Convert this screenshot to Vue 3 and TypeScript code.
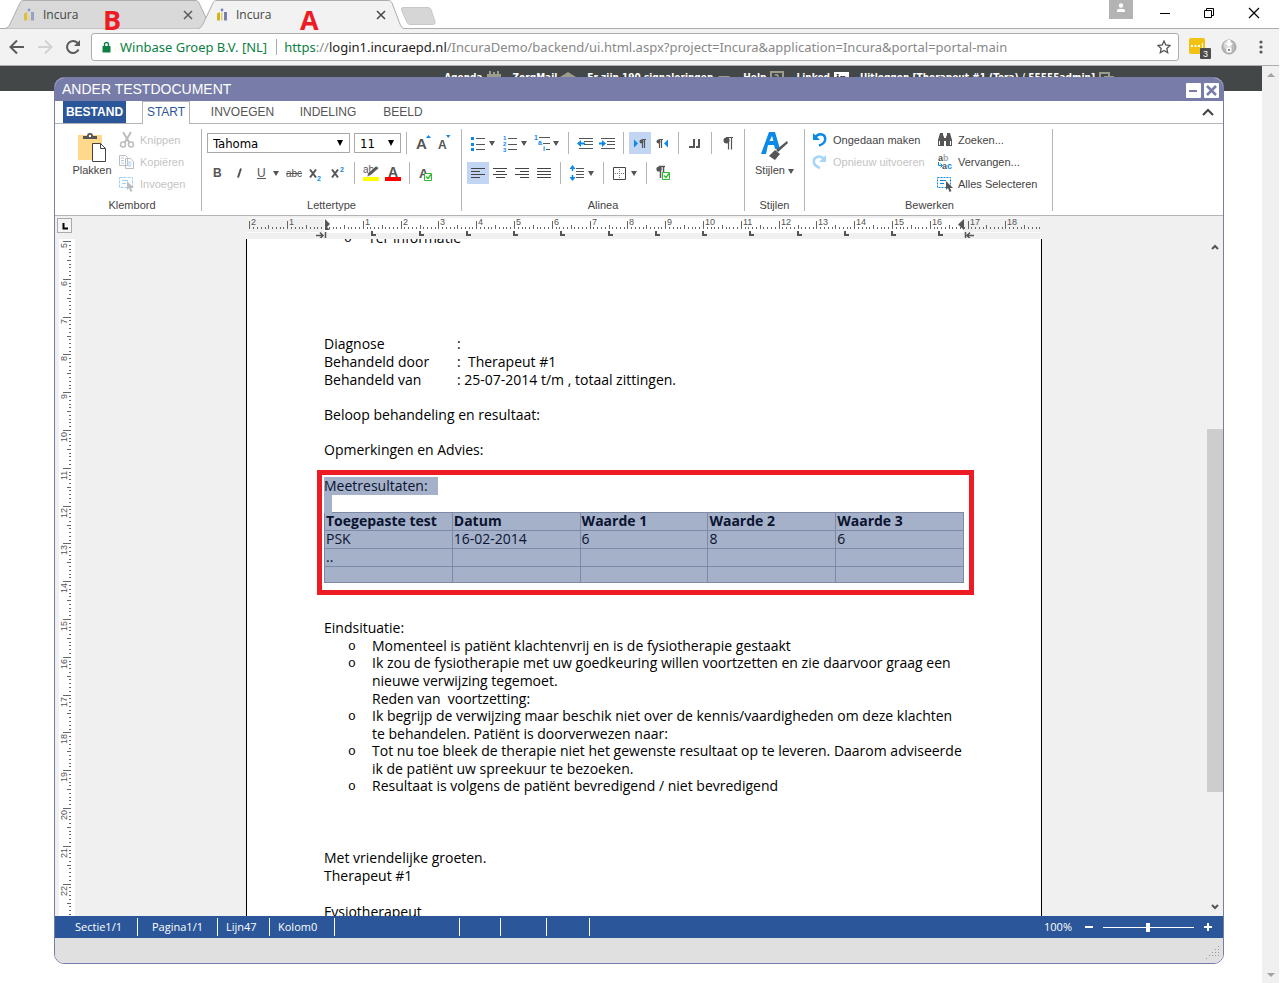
<script setup lang="ts">
import { ref } from 'vue'

interface Tick { pos: number; len: number; label: string }

const CM = 37.8
const fontName = ref('Tahoma')
const fontSize = ref('11')
const zoom = ref(49)

function buildTicks(from: number, to: number, origin: number, limit: number): Tick[] {
  const ticks: Tick[] = []
  for (let i = from * 10; i <= to * 10; i++) {
    const pos = Math.round(origin + (i * CM) / 10)
    if (pos < 0 || pos > limit) continue
    const whole = i % 10 === 0
    ticks.push({ pos, len: whole ? 8 : i % 5 === 0 ? 4 : 2, label: whole && i !== 0 ? String(Math.abs(i / 10)) : '' })
  }
  return ticks
}

const hTicks = buildTicks(-2, 19, 77, 792)
const vTicks = buildTicks(5, 23, -187, 676)
const tabStops = Array.from({ length: 13 }, (_, i) => Math.round(78 + (i + 1) * 1.25 * CM))

const columns = ['Toegepaste test', 'Datum', 'Waarde 1', 'Waarde 2', 'Waarde 3']
const results = [
  ['PSK', '16-02-2014', '6', '8', '6'],
  ['..', '', '', '', ''],
  ['', '', '', '', ''],
]
const outcomes: string[][] = [
  ['Momenteel is patiënt klachtenvrij en is de fysiotherapie gestaakt'],
  ['Ik zou de fysiotherapie met uw goedkeuring willen voortzetten en zie daarvoor graag een', 'nieuwe verwijzing tegemoet.', 'Reden van\u00a0 voortzetting:'],
  ['Ik begrijp de verwijzing maar beschik niet over de kennis/vaardigheden om deze klachten', 'te behandelen. Patiënt is doorverwezen naar:'],
  ['Tot nu toe bleek de therapie niet het gewenste resultaat op te leveren. Daarom adviseerde', 'ik de patiënt uw spreekuur te bezoeken.'],
  ['Resultaat is volgens de patiënt bevredigend / niet bevredigend'],
]
</script>

<template>
  <div class="browser">
    <header class="tabstrip">
      <div class="tab tab-back">
        <svg class="tab-shape" viewBox="0 0 206 29" preserveAspectRatio="none"><path d="M0 28.5C3 28 4 26 5 24L15 3C16 1 17 .5 19 .5H190C192 .5 193 1 194 3L204 24C205 26 206 28.500 208 28.500" fill="#d9d9d9" stroke="#adadad" /></svg>
        <svg class="fav" viewBox="0 0 13 14"><path d="M1 5.500L4 4v8.500H1z" fill="#dcc03a" /><path d="M5 5l1.500-1v8.500H5z" fill="#e3d48c" /><circle cx="6" cy="2" r="1.400" fill="#8d9bc4" /><path d="M8 4h3v8.500H8z" fill="#9a9fc6" /><path d="M5.500 4H7v3H5.500z" fill="#d9d9d9" /></svg>
        <span>Incura</span>
        <button class="x" aria-label="Tab sluiten"><svg viewBox="0 0 10 10"><path d="M1 1l8 8M9 1l-8 8" stroke="#5a5a5a" stroke-width="1.500" /></svg></button>
        <b class="mark">B</b>
      </div>
      <div class="tab tab-front">
        <svg class="tab-shape" viewBox="0 0 206 29" preserveAspectRatio="none"><path d="M0 28.5C3 28 4 26 5 24L15 3C16 1 17 .5 19 .5H190C192 .5 193 1 194 3L202 24C203 26 204 28.500 206 28.500V29H0z" fill="#f2f2f2" /><path d="M0 28.5C3 28 4 26 5 24L15 3C16 1 17 .5 19 .5H190C192 .5 193 1 194 3L202 24C203 26 204 28.500 206 28.500" fill="none" stroke="#adadad" /></svg>
        <svg class="fav" viewBox="0 0 13 14"><path d="M1 5.500L4 4v8.500H1z" fill="#d3b21c" /><path d="M5 5l1.500-1v8.500H5z" fill="#dccb70" /><circle cx="6" cy="2" r="1.400" fill="#6f83b6" /><path d="M8 4h3v8.500H8z" fill="#7b80b4" /></svg>
        <span>Incura</span>
        <button class="x" aria-label="Tab sluiten"><svg viewBox="0 0 10 10"><path d="M1 1l8 8M9 1l-8 8" stroke="#444" stroke-width="1.500" /></svg></button>
        <b class="mark">A</b>
      </div>
      <button class="newtab" aria-label="Nieuw tabblad"><svg viewBox="0 0 36 18"><path d="M3 .5h25q2 0 3 2l4 12q.5 3-2 3H10q-2 0-3-2L1.500 3Q1 .5 3 .5z" fill="#d6d6d6" stroke="#c8c8c8" /></svg></button>
      <div class="grow"></div>
      <button class="person" aria-label="Profiel"><svg viewBox="0 0 24 19"><circle cx="12" cy="5.500" r="2.200" fill="#fff" /><path d="M8 12V10.500Q8 8.700 12 8.700T16 10.500V12z" fill="#fff" /></svg></button>
      <button class="win" aria-label="Minimaliseren"><svg viewBox="0 0 12 12"><path d="M1 6.500h10" stroke="#000" /></svg></button>
      <button class="win" aria-label="Herstellen"><svg viewBox="0 0 12 12"><path d="M1.500 3.500h7v7h-7zM3.500 3.500v-2h7v7h-2" fill="none" stroke="#000" /></svg></button>
      <button class="win" aria-label="Sluiten"><svg viewBox="0 0 12 12"><path d="M1 1l10 10M11 1L1 11" stroke="#000" stroke-width="1.200" /></svg></button>
    </header>

    <nav class="toolbar">
      <button class="nav" aria-label="Terug"><svg viewBox="0 0 16 16"><path d="M15 8H2M8 1.500L1.500 8 8 14.500" fill="none" stroke="#5a5a5a" stroke-width="2" /></svg></button>
      <button class="nav" aria-label="Vooruit"><svg viewBox="0 0 16 16"><path d="M1 8h13M8 1.500L14.500 8 8 14.500" fill="none" stroke="#d2d2d2" stroke-width="2" /></svg></button>
      <button class="nav" aria-label="Vernieuwen"><svg viewBox="0 0 16 16"><path d="M13.500 10.500A6 6 0 1 1 12.500 4" fill="none" stroke="#5a5a5a" stroke-width="2" /><path d="M15 1v6H9z" fill="#5a5a5a" /></svg></button>
      <div class="address">
        <svg class="lock" viewBox="0 0 9 12"><path d="M.5 5h8v6.500h-8z" fill="#0b8043" /><path d="M2.500 5V3.500a2 2 0 0 1 4 0V5" fill="none" stroke="#0b8043" stroke-width="1.400" /></svg>
        <span class="green">Winbase Groep B.V. [NL]</span>
        <i class="bar"></i>
        <span class="url"><span class="green">https</span>://<span class="host">login1.incuraepd.nl</span>/IncuraDemo/backend/ui.html.aspx?project=Incura&amp;application=Incura&amp;portal=portal-main</span>
        <button class="star" aria-label="Bladwijzer"><svg viewBox="0 0 14 14"><path d="M7 1l1.800 4 4.200.5-3.200 2.900.9 4.300L7 10.500l-3.700 2.200.9-4.300L1 5.500l4.200-.5z" fill="none" stroke="#555" stroke-width="1.300" /></svg></button>
      </div>
      <button class="ext" aria-label="Extensie"><svg viewBox="0 0 24 24"><rect x="1" y="3" width="16" height="16" rx="2" fill="#f2c212" /><path d="M3 10h2v2H3zM6.500 10h2v2h-2zM10 10h2v2h-2zM14 8h1v5h-1z" fill="#fff" /><rect x="12" y="13" width="11" height="11" rx="1" fill="#4d4d4d" /><text x="15" y="22" font-size="9" fill="#fff">3</text></svg></button>
      <button class="orb" aria-label="Downloads"><svg viewBox="0 0 16 16"><circle cx="8" cy="8" r="7" fill="#b8b8b8" stroke="#a2a2a2" /><circle cx="7" cy="6" r="4.500" fill="#d9d9d9" /><path d="M6.500 1h3v3H12L8 8 4 4h2.500z" fill="#fff" /><rect x="5.500" y="8.500" width="5" height="5" rx="1" fill="#fff" /><rect x="7" y="10" width="2" height="2" fill="#888" /></svg></button>
      <button class="dots" aria-label="Menu"><svg viewBox="0 0 4 14"><circle cx="2" cy="2" r="1.600" fill="#5a5a5a" /><circle cx="2" cy="7" r="1.600" fill="#5a5a5a" /><circle cx="2" cy="12" r="1.600" fill="#5a5a5a" /></svg></button>
    </nav>

    <main class="site">
      <div class="content">
        <div class="menubar">
          <a href="#">Agenda<svg viewBox="0 0 16 14"><path d="M1 3h14v10H1z" fill="#9c9c8c" /><path d="M4 0v5M8 1v3M12 0v5" stroke="#9c9c8c" stroke-width="2" /></svg></a>
          <a href="#">ZorgMail<svg viewBox="0 0 16 14"><path d="M0 6l8-5 8 5v7H0z" fill="#9c9c8c" /></svg></a>
          <a href="#">Er zijn 190 signaleringen<svg viewBox="0 0 16 14"><path d="M2 5h12l-6 6z" fill="#9c9c8c" /></svg></a>
          <a href="#">Help<svg viewBox="0 0 16 14"><rect x="2" y="1" width="12" height="12" fill="none" stroke="#9c9c8c" stroke-width="2" /><text x="5" y="11" font-size="10" fill="#9c9c8c">?</text></svg></a>
          <a href="#">Linked<svg viewBox="0 0 16 14"><rect x="1" y="1" width="15" height="13" fill="#fff" /><text x="3" y="11" font-size="11" font-weight="bold" fill="#222">in</text></svg></a>
          <a href="#">Uitloggen [Therapeut #1 (Tera) / 55555admin]<svg viewBox="0 0 16 14"><path d="M10 12H2V2h9v3M6 6h9v5" fill="none" stroke="#9c9c8c" stroke-width="2" /></svg></a>
        </div>
      </div>
      <aside class="pagescroll">
        <svg viewBox="0 0 8 4"><path d="M0 4l4-4 4 4z" fill="#a3a3a3" /></svg>
        <svg viewBox="0 0 8 4"><path d="M0 0l4 4 4-4z" fill="#a3a3a3" /></svg>
      </aside>

      <section class="dialog">
        <div class="title">
          <span>ANDER TESTDOCUMENT</span>
          <button aria-label="Minimaliseren"><svg viewBox="0 0 15 15"><path d="M3 8h8" stroke="#777da8" stroke-width="2" /></svg></button>
          <button aria-label="Sluiten"><svg viewBox="0 0 15 15"><path d="M3 3l9 9M12 3l-9 9" stroke="#777da8" stroke-width="2.500" /></svg></button>
        </div>
        <div class="tabs">
          <button class="file">BESTAND</button>
          <button class="active">START</button>
          <button class="t3">INVOEGEN</button>
          <button class="t4">INDELING</button>
          <button class="t5">BEELD</button>
          <button class="fold" aria-label="Lint samenvouwen"><svg viewBox="0 0 12 8"><path d="M1 7l5-5 5 5" fill="none" stroke="#444" stroke-width="2" /></svg></button>
        </div>

        <div class="ribbon">
          <div class="group g1">
            <div class="body clip">
              <button class="big">
                <svg viewBox="0 0 30 32" width="30" height="32"><rect x="1" y="4" width="24" height="25" fill="#ffd88c" /><path d="M6 8V5h4q0-3 3-3t3 3h4v3z" fill="#555" /><circle cx="13" cy="5" r="1.200" fill="#fff" /><path d="M15.500 12.500h8l5 5v13h-13z" fill="#fff" stroke="#444" /><path d="M23.500 12.500v5h5" fill="none" stroke="#444" /></svg>
                Plakken
              </button>
              <div class="stack">
                <button disabled><svg viewBox="0 0 16 16"><path d="M4 0l6.500 11M12 0L5.500 11" stroke="#bdbdbd" stroke-width="2" /><circle cx="4" cy="12.500" r="2.500" fill="none" stroke="#bdbdbd" stroke-width="1.500" /><circle cx="12" cy="12.500" r="2.500" fill="none" stroke="#bdbdbd" stroke-width="1.500" /></svg>Knippen</button>
                <button disabled><svg viewBox="0 0 16 16"><path d="M.5 1.500h6l2 2v8h-8zM6.500 4.500h5l3 3v7h-8z" fill="#fff" stroke="#bdbdbd" /><path d="M2 4h3M2 6.500h3M2 9h3M8.500 8h4M8.500 10h4M8.500 12h4" stroke="#a6cdf0" /></svg>Kopiëren</button>
                <button disabled><svg viewBox="0 0 16 16"><path d="M.5 1.500h13v10H.5z" fill="none" stroke="#9fd0f7" stroke-dasharray="3 1" /><path d="M3 4.500h6M3 7.500h4" stroke="#9fd0f7" /><path d="M8 5v9l2-2 1.500 4 2-1-1.500-3h3z" fill="#bdbdbd" /></svg>Invoegen</button>
              </div>
            </div>
            <div class="cap">Klembord</div>
          </div>

          <div class="group g2">
            <div class="body rows">
              <div class="row">
                <label class="sel fontsel"><select v-model="fontName" aria-label="Lettertype"><option>Tahoma</option></select><i class="car"></i></label>
                <label class="sel sizesel"><select v-model="fontSize" aria-label="Tekengrootte"><option>11</option></select><i class="car"></i></label>
                <i class="sep"></i>
                <button class="b" aria-label="Groter"><svg viewBox="0 0 22 22"><text x="4" y="17" font-size="15" font-weight="bold" fill="#555">A</text><path d="M14 6l2.500-3L19 6z" fill="#0a8ae6" /></svg></button>
                <button class="b" aria-label="Kleiner"><svg viewBox="0 0 22 22"><text x="4" y="17" font-size="12" font-weight="bold" fill="#555">A</text><path d="M12 3h4.500L14.200 6z" fill="#0a8ae6" /></svg></button>
              </div>
              <div class="row">
                <button class="b"><svg viewBox="0 0 22 22"><text x="6" y="15" font-size="12" font-weight="bold" fill="#555">B</text></svg></button>
                <button class="b"><svg viewBox="0 0 22 22"><path d="M12 6.500l-3 9" stroke="#555" stroke-width="2" /></svg></button>
                <button class="b w"><svg viewBox="0 0 22 22"><text x="6" y="15" font-size="12" fill="#555">U</text><path d="M6 16.500h9" stroke="#555" /></svg><i class="car s"></i></button>
                <button class="b"><svg viewBox="0 0 22 22"><text x="3" y="15" font-size="10" fill="#555">abc</text><path d="M3 11.500h16" stroke="#555" /></svg></button>
                <button class="b"><svg viewBox="0 0 22 22"><path d="M5 7.500l6 8M11 7.500l-6 8" stroke="#555" stroke-width="2" /><text x="12" y="19" font-size="7" font-weight="bold" fill="#0a8ae6">2</text></svg></button>
                <button class="b"><svg viewBox="0 0 22 22"><path d="M5 7.500l6 8M11 7.500l-6 8" stroke="#555" stroke-width="2" /><text x="13" y="10" font-size="7" font-weight="bold" fill="#0a8ae6">2</text></svg></button>
                <i class="sep"></i>
                <button class="b"><svg viewBox="0 0 22 22"><text x="3" y="11" font-size="10" fill="#555">ab</text><path d="M7 15l1-4 8-7 3 2-8 7z" fill="#555" stroke="#fff" stroke-width=".6" /><path d="M3 15h16v4H3z" fill="#ff0" /></svg></button>
                <button class="b"><svg viewBox="0 0 22 22"><text x="6" y="15" font-size="14" font-weight="bold" fill="#555">A</text><path d="M3 15h16v4H3z" fill="#f00" /></svg></button>
                <i class="sep"></i>
                <button class="b"><svg viewBox="0 0 22 22"><text x="4" y="16" font-size="13" font-weight="bold" fill="#555">A</text><path d="M9.500 11.500h7v7h-7z" fill="#fff" stroke="#2db82d" /><path d="M11 14.500l2 2 3-4" fill="none" stroke="#2db82d" stroke-width="1.300" /></svg></button>
              </div>
            </div>
            <div class="cap">Lettertype</div>
          </div>

          <div class="group g3">
            <div class="body rows">
              <div class="row">
                <button class="b w"><svg viewBox="0 0 22 22"><path d="M9 6.500h9M9 12.500h9M9 17.500h9" stroke="#555" /><path d="M4 5h3v3H4zM4 11h3v3H4zM4 16h3v3H4z" fill="#0a8ae6" /></svg><i class="car s"></i></button>
                <button class="b w"><svg viewBox="0 0 22 22"><path d="M9 6.500h9M9 12.500h9M9 17.500h9" stroke="#555" /><g fill="#0a8ae6" font-size="6" font-weight="bold"><text x="4" y="8">1</text><text x="4" y="14">2</text><text x="4" y="20">3</text></g></svg><i class="car s"></i></button>
                <button class="b w"><svg viewBox="0 0 22 22"><path d="M8 5.500h11M12 11.500h7M15 17.500h4" stroke="#555" /><g fill="#0a8ae6" font-size="7" font-weight="bold"><text x="3" y="8">1</text><text x="7" y="13">a</text><text x="12" y="19">i</text></g></svg><i class="car s"></i></button>
                <i class="sep"></i>
                <button class="b"><svg viewBox="0 0 22 22"><path d="M5 6.500h14M10 9.500h9M10 12.500h9M5 16.500h14" stroke="#555" /><path d="M3 11.500L7 8v2.500h4v2H7V15z" fill="#0a8ae6" /></svg></button>
                <button class="b"><svg viewBox="0 0 22 22"><path d="M5 6.500h14M11 9.500h8M11 12.500h8M5 16.500h14" stroke="#555" /><path d="M10 11.500L6 8v2.500H3v2h3V15z" fill="#0a8ae6" /></svg></button>
                <i class="sep"></i>
                <button class="b on"><svg viewBox="0 0 22 22"><path d="M5 7.500l4 4-4 4z" fill="#0a8ae6" /><path d="M17 7.500h-4M13.500 7v9M15.500 7v9" fill="none" stroke="#555" stroke-width="1.200" /><circle cx="12.500" cy="9.500" r="2" fill="#555" /></svg></button>
                <button class="b"><svg viewBox="0 0 22 22"><path d="M17 7.500l-4 4 4 4z" fill="#0a8ae6" /><path d="M12 7.500H8M8.500 7v9M10.500 7v9" fill="none" stroke="#555" stroke-width="1.200" /><circle cx="7.500" cy="9.500" r="2" fill="#555" /></svg></button>
                <i class="sep"></i>
                <button class="b"><svg viewBox="0 0 22 22"><path d="M5 15h6M10 7v9" fill="none" stroke="#555" stroke-width="2" /><path d="M12 15h4M15 7v9" stroke="#555" stroke-width="2" /></svg></button>
                <i class="sep"></i>
                <button class="b"><svg viewBox="0 0 22 22"><path d="M16 5.500h-7M11.500 5v12.500M14.500 5v12.500" fill="none" stroke="#555" stroke-width="1.200" /><circle cx="9.500" cy="8.500" r="3" fill="#555" /></svg></button>
              </div>
              <div class="row">
                <button class="b on"><svg viewBox="0 0 22 22"><path d="M4 6.500h14M4 9.500h9M4 12.500h14M4 15.500h9" stroke="#444" /></svg></button>
                <button class="b"><svg viewBox="0 0 22 22"><path d="M4 6.500h14M7 9.500h9M4 12.500h14M7 15.500h9" stroke="#444" /></svg></button>
                <button class="b"><svg viewBox="0 0 22 22"><path d="M4 6.500h14M9 9.500h9M4 12.500h14M9 15.500h9" stroke="#444" /></svg></button>
                <button class="b"><svg viewBox="0 0 22 22"><path d="M4 6.500h14M4 9.500h14M4 12.500h14M4 15.500h14" stroke="#444" /></svg></button>
                <i class="sep"></i>
                <button class="b w"><svg viewBox="0 0 22 22"><path d="M10 6.500h8M10 9.500h8M10 12.500h8M10 15.500h8" stroke="#555" /><path d="M6.500 4v5M6.500 13v5" stroke="#0a8ae6" stroke-width="1.500" /><path d="M3.500 7l3-4 3 4zM3.500 15l3 4 3-4z" fill="#0a8ae6" /></svg><i class="car s"></i></button>
                <i class="sep"></i>
                <button class="b w"><svg viewBox="0 0 22 22"><path d="M4.500 5.500h12v12h-12z" fill="none" stroke="#444" /><path d="M10.500 7v9M6 11.500h9" stroke="#777" stroke-dasharray="1 1" /></svg><i class="car s"></i></button>
                <i class="sep"></i>
                <button class="b"><svg viewBox="0 0 22 22"><path d="M13 4.500H7M8.500 5v11M11.500 5v6" stroke="#555" stroke-width="1.500" /><circle cx="7" cy="7" r="2.600" fill="#555" /><path d="M10.500 10.500h7v7h-7z" fill="#fff" stroke="#2db82d" /><path d="M12 13.500l2 2 3-4" fill="none" stroke="#2db82d" stroke-width="1.300" /></svg></button>
              </div>
            </div>
            <div class="cap">Alinea</div>
          </div>

          <div class="group g4">
            <div class="body">
              <button class="big styles">
                <svg viewBox="0 0 30 32" width="30" height="32"><path d="M1 24L9 2h6l5 17h-5l-1-4H8l-2 9zM9.500 11h4L12 6z" fill="#0a8ae6" fill-rule="evenodd" /><path d="M27 11l1 2-10 9-2-2z" fill="#555" /><path d="M9 26l6-6 5 4-5 6z" fill="#555" /></svg>
                <span>Stijlen <i class="car s"></i></span>
              </button>
            </div>
            <div class="cap">Stijlen</div>
          </div>

          <div class="group g5">
            <div class="body two">
              <div class="stack">
                <button><svg viewBox="0 0 16 16"><path d="M3 5.500Q6 1.500 10 2.500T13 8.500Q12 12 7 13.500" fill="none" stroke="#0a8ae6" stroke-width="2.500" /><path d="M1 1v7h7z" fill="#0a8ae6" /></svg>Ongedaan maken</button>
                <button disabled><svg viewBox="0 0 16 16"><path d="M12 5.500Q9 1.500 5 3T2 9Q3 12 8 14" fill="none" stroke="#a5d5f8" stroke-width="2.500" /><path d="M14 1v7H7z" fill="#a5d5f8" /></svg>Opnieuw uitvoeren</button>
              </div>
              <div class="stack">
                <button><svg viewBox="0 0 16 16"><path d="M3 1h3v2l1 2v9H1V8zM13 1h-3v2L9 5v9h6V8z" fill="#555" /><path d="M6 6h4v3H6z" fill="#555" /><path d="M2.500 9v4M13.500 9v4" stroke="#fff" /></svg>Zoeken...</button>
                <button><svg viewBox="0 0 16 16"><text x="1" y="7" font-size="9" font-weight="bold" fill="#555">a<tspan fill="#aaa">b</tspan></text><text x="5" y="15" font-size="9" font-weight="bold" fill="#555">a<tspan fill="#0a8ae6">c</tspan></text><path d="M1.500 8v3.500H5M3.500 9.500l2 2-2 2" fill="none" stroke="#0a8ae6" /></svg>Vervangen...</button>
                <button><svg viewBox="0 0 16 16"><path d="M.5 1.500h13v10H.5z" fill="none" stroke="#0a8ae6" stroke-dasharray="2 1" /><path d="M3 4.500h6M3 7.500h4" stroke="#0a8ae6" /><path d="M9 5v9l2-2 1.500 4 2-1-1.500-3h3z" fill="#555" /></svg>Alles Selecteren</button>
              </div>
            </div>
            <div class="cap">Bewerken</div>
          </div>
        </div>

        <div class="hruler">
          <button class="corner" aria-label="Tabstop"><svg viewBox="0 0 12 12"><path d="M4.500 3v5.500H9" fill="none" stroke="#000" stroke-width="2" /></svg></button>
          <div class="center">
            <svg width="794" height="22" viewBox="0 0 794 22">
              <rect x="0" y="2" width="794" height="15" fill="#fafafa" />
              <rect x="0" y="3" width="77" height="13" fill="#f0f0f0" />
              <rect x="77" y="2" width="640" height="15" fill="#fff" />
              <rect x="717" y="3" width="77" height="13" fill="#f0f0f0" />
              <template v-for="t in hTicks" :key="t.pos">
                <path :d="`M${t.pos + 1.5} ${13 - t.len}V13`" stroke="#666" />
                <text v-if="t.label" :x="t.pos + 3" y="9" font-size="9" fill="#555">{{ t.label }}</text>
              </template>
              <path d="M78 3l5 5-5 5zM78 9l5 5h-5z" fill="#555" />
              <path d="M717 3v11l-6-5.500z" fill="#555" />
              <path v-for="s in tabStops" :key="s" :d="`M${s} 15v4h4`" fill="none" stroke="#555" stroke-width="2" />
              <path d="M69 19.500h7M78.500 16v6M73 16.500l3 3-3 3" fill="none" stroke="#555" stroke-width="1.500" />
              <path d="M727 19.500h-7M718.500 16v6M723 16.500l-3 3 3 3" fill="none" stroke="#555" stroke-width="1.500" />
            </svg>
          </div>
        </div>

        <div class="editor">
          <div class="vruler">
            <svg width="16" height="677" viewBox="0 0 16 677">
              <rect width="16" height="677" fill="#fff" />
              <template v-for="t in vTicks" :key="t.pos">
                <path :d="`M${12 - t.len} ${t.pos + 0.5}H12`" stroke="#666" />
                <text v-if="t.label" :transform="`translate(8 ${t.pos + 2 + t.label.length * 5}) rotate(-90)`" font-size="9" fill="#555">{{ t.label }}</text>
              </template>
            </svg>
          </div>
          <div class="canvas">
            <article class="paper">
              <ul class="list lead"><li><span>Ter informatie</span></li></ul>
              <dl>
                <dt>Diagnose</dt><dd>:</dd>
                <dt>Behandeld door</dt><dd>:&nbsp; Therapeut #1</dd>
                <dt>Behandeld van</dt><dd>: 25-07-2014 t/m , totaal zittingen.</dd>
              </dl>
              <p class="p1">Beloop behandeling en resultaat:</p>
              <p class="p2">Opmerkingen en Advies:</p>
              <section class="marked">
                <p><span class="hl">Meetresultaten:</span></p>
                <p class="blank"><span class="hl"></span></p>
                <table>
                  <thead><tr><th v-for="c in columns" :key="c">{{ c }}</th></tr></thead>
                  <tbody><tr v-for="(r, i) in results" :key="i"><td v-for="(c, j) in r" :key="j">{{ c }}</td></tr></tbody>
                </table>
              </section>
              <p>Eindsituatie:</p>
              <ul class="list">
                <li v-for="(o, i) in outcomes" :key="i"><span v-for="l in o" :key="l">{{ l }}</span></li>
              </ul>
              <p class="p4">Met vriendelijke groeten.</p>
              <p>Therapeut #1</p>
              <p class="p5">Fysiotherapeut</p>
            </article>
          </div>
          <div class="vscroll">
            <svg viewBox="0 0 8 6"><path d="M1 5l3-3 3 3" fill="none" stroke="#555" stroke-width="2" /></svg>
            <div class="track"><i></i></div>
            <svg viewBox="0 0 8 6"><path d="M1 1l3 3 3-3" fill="none" stroke="#555" stroke-width="2" /></svg>
          </div>
        </div>

        <footer class="status">
          <span class="s1">Sectie1/1</span><span class="s2">Pagina1/1</span><span class="s3">Lijn47</span><span class="s4">Kolom0</span>
          <span class="s5"></span><span class="s6"></span><span class="s7"></span><span class="s8"></span>
          <div class="zoom">
            <span>100%</span>
            <button aria-label="Uitzoomen"><svg viewBox="0 0 8 8"><path d="M0 4h8" stroke="#fff" stroke-width="2" /></svg></button>
            <input v-model="zoom" type="range" min="0" max="100" aria-label="Zoom" />
            <button aria-label="Inzoomen"><svg viewBox="0 0 8 8"><path d="M0 4h8M4 0v8" stroke="#fff" stroke-width="2" /></svg></button>
          </div>
        </footer>
        <div class="foot">
          <svg viewBox="0 0 14 14"><path d="M13.500 1v12M10.500 4v9M7.500 7v6M4.500 10v3M1.500 13v1" stroke="#999" stroke-dasharray="1 2" /></svg>
        </div>
      </section>
    </main>
  </div>
</template>

<style>
html, body { background: #fff; }
body { margin: 0; overflow: hidden; }
</style>

<style scoped>
* { box-sizing: border-box; }
button { border: 0; padding: 0; margin: 0; background: none; font: inherit; color: inherit; display: flex; align-items: center; justify-content: center; }
svg { display: block; }
a { color: inherit; text-decoration: none; }
p { margin: 0; }
.browser { display: flex; flex-direction: column; height: 100vh; padding-right: 3px; font-family: "Liberation Sans", Arial, sans-serif; font-size: 11px; color: #444; }

.tabstrip { display: flex; height: 29px; padding-left: 5px; position: relative; z-index: 1; margin-bottom: -1px; }
.tab { position: relative; display: flex; align-items: center; width: 200px; padding: 0 12px 0 18px; font-family: "Open Sans", sans-serif; font-size: 12px; color: #444; }
.tab-shape { position: absolute; left: 0; top: 0; width: 206px; height: 29px; }
.tab-front { z-index: 1; margin-left: -7px; }
.tab > span { position: relative; margin-left: 7px; flex: 1; }
.fav { position: relative; width: 13px; height: 14px; }
.x { position: relative; width: 10px; height: 10px; }
.x svg { width: 10px; height: 10px; }
.mark { position: absolute; left: 98px; top: 4px; font: bold 27px/32px "Open Sans", sans-serif; color: #ed1c24; }
.tab-front .mark { left: 102px; }
.newtab { width: 36px; height: 18px; margin: 7px 0 0 2px; z-index: 1; }
.grow { flex: 1; }
.person { width: 24px; height: 19px; background: #b3b3b3; margin-right: 23px; }
.person svg { width: 24px; height: 19px; }
.win { width: 45px; height: 26px; }
.person + .win { margin-left: -14px; margin-right: -1px; }
.win:last-child { margin-right: 3px; }
.win svg { width: 12px; height: 12px; }

.toolbar { display: flex; align-items: center; height: 38px; background: #f2f2f2; border-top: 1px solid #adadad; border-bottom: 1px solid #adadad; padding: 0 16px 0 9px; }
.nav { width: 16px; height: 16px; margin-right: 12px; }
.nav svg { width: 16px; height: 16px; }
.nav:nth-child(3) { margin-right: 10px; }
.address { flex: 1; display: flex; align-items: center; height: 28px; border: 1px solid #adadad; border-radius: 3px; background: #fff; padding: 0 7px 0 10px; font-family: "Noto Sans", sans-serif; font-size: 13px; color: #888; white-space: nowrap; }
.lock { width: 9px; height: 12px; margin-right: 9px; }
.green { color: #0b8043; }
.host { color: #222; }
.bar { width: 1px; height: 16px; background: #aaa; margin: 0 7px 0 9px; }
.url { flex: 1; }
.star svg { width: 14px; height: 14px; }
.ext { width: 24px; height: 24px; margin-left: 9px; }
.ext svg { width: 24px; height: 24px; }
.orb { width: 16px; height: 16px; margin-left: 9px; }
.orb svg { width: 16px; height: 16px; }
.dots { width: 4px; height: 14px; margin-left: 22px; }
.dots svg { width: 4px; height: 14px; }

.site { position: relative; flex: 1; display: flex; min-height: 0; }
.content { flex: 1; }
.menubar { display: flex; justify-content: flex-end; height: 25px; background: #444748; color: #fff; font: bold 10px/14px "DejaVu Sans Condensed", Tahoma, sans-serif; padding: 5px 148px 0 0; white-space: nowrap; }
.menubar a { display: flex; margin-left: 11px; }
.menubar svg { width: 16px; height: 14px; margin-left: 3px; }
.pagescroll { width: 17px; background: #f0f0f0; display: flex; flex-direction: column; justify-content: space-between; align-items: center; padding: 7px 0 6px; }
.pagescroll svg { width: 8px; height: 4px; }

.dialog { position: absolute; left: 54px; right: 55px; top: 11px; bottom: 19px; display: flex; flex-direction: column; border: 1px solid #777da8; border-radius: 10px; overflow: hidden; background: #fff; }
.title { display: flex; align-items: center; height: 23px; background: #777da8; padding: 0 4px 0 7px; font-size: 14px; color: #fff; }
.title span { flex: 1; padding-bottom: 2px; }
.title button { width: 15px; height: 15px; background: #fff; margin-left: 3px; margin-top: 2px; border-radius: 1px; }
.title svg { width: 15px; height: 15px; }
.tabs { display: flex; height: 23px; padding-left: 8px; border-bottom: 1px solid #b4b4b4; font-size: 12px; color: #555; }
.tabs button { height: 22px; }
.tabs .file { width: 63px; background: #2b579a; color: #fff; font-weight: bold; }
.tabs .active { width: 48px; height: 23px; margin-left: 16px; padding-bottom: 2px; border: 1px solid #b4b4b4; border-bottom: 0; background: #fff; color: #2b579a; }
.tabs .t3 { margin-left: 21px; width: 63px; }
.tabs .t4 { margin-left: 25px; width: 58px; }
.tabs .t5 { margin-left: 26px; width: 40px; }
.tabs .fold { margin: 0 9px 0 auto; width: 12px; }
.fold svg { width: 12px; height: 8px; }

.ribbon { display: flex; height: 92px; padding-top: 5px; border-bottom: 1px solid #b4b4b4; }
.group { display: flex; flex-direction: column; height: 82px; border-right: 1px solid #b4b4b4; }
.g1 { width: 147px; padding: 0 8px 0 16px; }
.g2 { width: 260px; padding-left: 5px; }
.g3 { width: 283px; padding-left: 5px; }
.g4 { width: 60px; }
.g5 { width: 248px; padding-left: 7px; }
.body { flex: 1; display: flex; }
.cap { height: 14px; line-height: 16px; text-align: center; margin-right: 5px; }
.g1 .cap, .g4 .cap { margin-right: 0; }
.big { flex-direction: column; justify-content: flex-start; align-self: flex-start; width: 42px; padding-top: 2px; line-height: 14px; }
.styles { width: 59px; padding-top: 1px; line-height: 16px; }
.stack { display: flex; flex-direction: column; }
.stack button { justify-content: flex-start; height: 22px; white-space: nowrap; }
.stack svg { width: 16px; height: 16px; margin-right: 5px; }
.stack button:disabled { color: #c4c4c4; }
.clip .stack { margin-left: 6px; }
.two .stack:first-child { width: 125px; }
.rows { flex-direction: column; gap: 8px; padding-top: 3px; }
.row { display: flex; align-items: center; height: 22px; }
.sep { width: 1px; height: 22px; background: #b4b4b4; margin: 0 5px; }
.b { width: 22px; height: 22px; }
.b svg { width: 22px; height: 22px; }
.b.w { width: 32px; justify-content: flex-start; }
.b.on { background: #c2d5f2; }
.car { display: inline-block; width: 0; height: 0; border: 3px solid transparent; border-top: 6px solid #000; border-bottom: 0; }
.car.s { border-top: 5px solid #555; }
.sel { position: relative; height: 20px; }
.sel select { display: block; appearance: none; width: 100%; height: 20px; border: 1px solid #a8a8a8; border-radius: 0; background: #fff; padding: 0 5px; font: 13px "DejaVu Sans Condensed", Tahoma, sans-serif; color: #000; }
.sel .car { position: absolute; right: 7px; top: 7px; }
.fontsel { width: 143px; }
.sizesel { width: 47px; margin-left: 4px; }

.hruler { display: flex; height: 23px; background: #f0f0f0; }
.corner { width: 15px; height: 15px; margin: 2px 8px 0 2px; background: #f4f4f4; border: 1px solid #aaa; }
.corner svg { width: 12px; height: 12px; }
.center { flex: 1; display: flex; justify-content: center; padding: 0 16px 0 1px; }
.editor { flex: 1; display: flex; min-height: 0; background: #f0f0f0; overflow: hidden; }
.vruler { width: 25px; padding-left: 4px; overflow: hidden; }
.canvas { flex: 1; display: flex; justify-content: center; min-width: 0; padding-left: 1px; }
.paper { width: 796px; background: #fff; border: 1px solid #000; border-width: 0 1px; padding: 0 77px; overflow: hidden; font: 14px/18px "Open Sans", Tahoma, sans-serif; color: #000; }
.list { list-style: none; margin: 0; padding: 0; white-space: nowrap; }
.list li { display: flex; flex-direction: column; padding-left: 48px; position: relative; }
.list li + li { margin-top: -1px; }
.list li::before { content: "o"; position: absolute; left: 24px; top: 1px; font: 13px/18px "Liberation Mono", monospace; }
.lead { margin: -10px 0 88px -4px; }
dl { display: grid; grid-template-columns: 133px 1fr; margin: 0; }
dd { margin: 0; }
.p1 { margin-top: 17px; }
.p2 { margin-top: 17px; }
.marked { margin: 11px -1px 24px -7px; border: 5px solid #ed1c24; padding: 2px 5px 7px 2px; width: 657px; }
.hl { display: inline-block; height: 18px; background: #a5b0c9; color: #0a1430; padding-right: 10px; vertical-align: top; }
.blank { height: 17px; }
.blank .hl { width: 8px; padding: 0; }
table { border-collapse: collapse; width: 640px; table-layout: fixed; background: #a5b0c9; color: #0a1430; }
th, td { border: 1px solid #7d89a5; height: 18px; padding: 0 1px 1px; text-align: left; line-height: 16px; white-space: nowrap; }
tr:last-child td { height: 16px; }
.p4 { margin-top: 54px; }
.p5 { margin-top: 18px; }
.vscroll { width: 16px; display: flex; flex-direction: column; align-items: center; padding: 5px 0 6px; }
.vscroll svg { width: 8px; height: 6px; }
.track { flex: 1; width: 16px; padding-top: 179px; }
.track i { display: block; height: 363px; background: #cdcdcd; }

.status { display: flex; align-items: center; height: 22px; background: #2b579a; color: #fff; font: 11px/18px "Open Sans", sans-serif; }
.status > span { height: 18px; border-right: 1px solid #fff; }
.s1 { width: 83px; padding-left: 20px; }
.s2 { width: 80px; padding-left: 14px; }
.s3 { width: 52px; padding-left: 8px; }
.s4 { width: 65px; padding-left: 8px; }
.s5 { width: 125px; }
.s6 { width: 41px; }
.s7 { width: 46px; }
.s8 { width: 43px; }
.zoom { margin-left: auto; display: flex; align-items: center; padding-right: 11px; }
.zoom button { width: 8px; height: 8px; margin-left: 13px; }
.zoom button:last-child { margin-left: 10px; }
.zoom button svg { width: 8px; height: 8px; }
.zoom input { appearance: none; width: 91px; height: 12px; margin: 0 0 0 10px; background: linear-gradient(#fff, #fff) center / 100% 1px no-repeat; }
.zoom input::-webkit-slider-thumb { appearance: none; width: 4px; height: 9px; background: #fff; border-radius: 0; }
.foot { height: 25px; background: #e0e0e0; display: flex; justify-content: flex-end; align-items: flex-end; padding: 0 4px 4px; }
.foot svg { width: 14px; height: 14px; }
</style>
